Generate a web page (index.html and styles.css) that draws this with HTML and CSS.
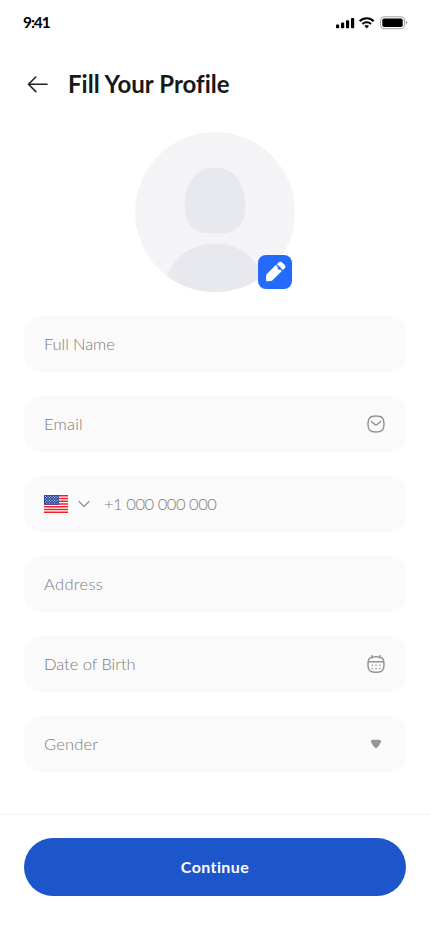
FILE: index.html
```html
<!DOCTYPE html>
<html lang="en">
<head>
<meta charset="utf-8">
<title>Fill Your Profile</title>
<link rel="stylesheet" href="styles.css">
</head>
<body>
<div class="screen">
  <div class="status">
    <span class="time">9:41</span>
    <svg width="72" height="14" viewBox="0 0 72 14">
      <rect x="0" y="8.6" width="3.2" height="3.6" rx=".8"/>
      <rect x="5" y="6.6" width="3.2" height="5.6" rx=".8"/>
      <rect x="10" y="4.2" width="3.2" height="8" rx=".8"/>
      <rect x="15" y="2" width="3.2" height="10.200" rx=".8"/>
      <g fill="none" stroke="#000" stroke-width="2">
        <path d="M23.7 5.200a9.900 9.900 0 0 1 14 0"/>
        <path d="M26.400 8a6.200 6.200 0 0 1 8.600 0"/>
      </g>
      <path d="M30.700 12.400l-2.300-2.500a3.500 3.500 0 0 1 4.600 0z"/>
      <rect x="44.500" y=".8" width="24" height="11.900" rx="3.500" fill="none" stroke="#a3a3a3"/>
      <rect x="46.300" y="2.500" width="20.400" height="8.500" rx="1.800"/>
      <path d="M69.800 4.800v4q1.300-.6 1.300-2t-1.300-2z" fill="#a3a3a3"/>
    </svg>
  </div>
  <header class="header">
    <svg width="22" height="20" viewBox="0 0 22 20" fill="none" stroke="#212121" stroke-width="1.600" stroke-linecap="round" stroke-linejoin="round"><path d="M20 10.300H1.500M8.800 3L1.500 10.300l7.300 7.300"/></svg>
    <h1 class="title">Fill Your Profile</h1>
  </header>
  <div class="avatar">
    <svg width="160" height="160" viewBox="0 0 160 160">
      <defs><clipPath id="circle"><circle cx="80" cy="80" r="80"/></clipPath></defs>
      <circle cx="80" cy="80" r="80" fill="#f4f4f7"/>
      <g fill="#e8e9ef" clip-path="url(#circle)">
        <path d="M80 35.500C101 35.500 110.300 54 110.300 74C110.300 93 101 101.300 86 101.300H74C59 101.300 49.700 93 49.700 74C49.700 54 59 35.500 80 35.500Z"/>
        <path d="M30 148C38 127 55 111.500 80 111.500S122 127 130 148V160H30Z"/>
      </g>
    </svg>
    <span class="edit">
      <svg width="34" height="34" viewBox="0 0 34 34" fill="#fff">
        <path d="M8.100 26.200V20.600Q8.100 19.800 8.700 19.200L17.800 10.100L19.800 12Q19.200 13.300 20.200 14.200Q21.100 15 22.200 14.400L23.900 16L14.500 25.300Q13.700 26 12.900 26.100Z"/>
        <path d="M18.700 9.200L20.600 7.500Q22.500 6 24.400 7.700L26.800 10Q28.200 11.700 26.800 13.200L24.900 15.100L22.700 13Q22.700 11.200 20.900 11.300Z"/>
      </svg>
    </span>
  </div>
  <main class="form">
    <div class="field"><span class="label name">Full Name</span></div>
    <div class="field"><span class="label email">Email</span>
      <svg width="20" height="20" viewBox="0 0 20 20" fill="none" stroke="#949494" stroke-width="1.400" stroke-linecap="round" stroke-linejoin="round"><path d="M10 2C4 2 2 4 2 10s2 8 8 8 8-2 8-8-2-8-8-8Z"/><path d="M5.500 7.600l3.300 2.800q1.200.9 2.400 0l3.300-2.800"/></svg>
    </div>
    <div class="field phone">
      <svg width="24" height="18" viewBox="0 0 24 18">
        <rect width="24" height="18" fill="#fff"/>
        <path d="M0 .7H24M0 3.460H24M0 6.230H24M0 9H24M0 11.770H24M0 14.540H24M0 17.300H24" stroke="#ed202b" stroke-width="1.500"/>
        <rect width="15" height="9.700" fill="#243f9e"/>
        <g stroke="#dce1f2" stroke-width="1" stroke-dasharray="1 1.600"><path d="M1 1.300H14.500M1 4H14.500M1 6.700H14.500"/><path d="M2.300 2.650H14.500M2.300 5.350H14.500M2.300 8.200H14.500"/></g>
      </svg>
      <svg class="chevron" width="12" height="8" viewBox="0 0 12 8" fill="none" stroke="#949494" stroke-width="1.300" stroke-linecap="round" stroke-linejoin="round"><path d="M1 1.500l5 5 5-5"/></svg>
      <span class="label number">+1 000 000 000</span>
    </div>
    <div class="field"><span class="label address">Address</span></div>
    <div class="field"><span class="label birth">Date of Birth</span>
      <svg width="20" height="20" viewBox="0 0 20 20" fill="none" stroke="#949494" stroke-width="1.400" stroke-linecap="round"><path d="M10 2.800C4 2.800 2 4.300 2 10.500s2 7.800 8 7.800 8-1.600 8-7.800-2-7.700-8-7.700Z"/><path d="M2.300 7.700H17.700M6.100 1.400V4M13.900 1.400V4"/><path d="M6.200 11.200h.1M10 11.200h.1M13.800 11.200h.1M6.200 14.400h.1M10 14.400h.1M13.800 14.400h.1" stroke-width="1.500"/></svg>
    </div>
    <div class="field"><span class="label gender">Gender</span>
      <svg width="20" height="20" viewBox="0 0 20 20" fill="#949494"><path d="M5 7.400Q4.700 6 6.200 5.900Q10 5.500 13.800 5.900Q15.300 6 15 7.400Q14.300 10.500 11.200 13.500Q10 14.600 8.800 13.500Q5.700 10.500 5 7.400Z"/></svg>
    </div>
  </main>
  <footer class="footer"><button class="continue" type="button"><span>Continue</span></button></footer>
</div>
</body>
</html>
```
FILE: styles.css
```css
* { box-sizing: border-box; }
body { margin: 0; background: #fff; font-family: "Lato", sans-serif; color: #181818; }
.screen { width: 430px; height: 932px; display: flex; flex-direction: column; overflow: hidden; }
.status { height: 44px; padding: 0 23px; display: flex; align-items: center; justify-content: space-between; }
.status svg { margin: 1px -1px 0 0; }
.time { font-size: 15.5px; font-weight: 700; line-height: 20px; letter-spacing: -1.1px; color: #000; }
.header { height: 80px; padding: 0 27px; display: flex; align-items: center; gap: 19px; }
.title { margin: 0; font-size: 24px; line-height: 32px; font-weight: 700; letter-spacing: .03px; white-space: nowrap; }
.avatar { position: relative; width: 160px; height: 160px; margin: 8px auto 24px; }
.avatar svg { display: block; }
.edit { position: absolute; left: 123px; top: 123px; width: 34px; height: 34px; border-radius: 8px; background: #246bfd; }
.form { display: flex; flex-direction: column; gap: 24px; padding: 0 24px; }
.field { height: 56px; border-radius: 16px; padding: 0 20px; background: #fafafa; display: flex; align-items: center; justify-content: space-between; }
.label { font-size: 16.5px; line-height: 24px; font-weight: 300; color: #7c7c7c; white-space: nowrap; }
.name { letter-spacing: -.08px; }
.email { letter-spacing: .2px; }
.number { letter-spacing: -.45px; }
.address { letter-spacing: .33px; }
.birth { letter-spacing: -.05px; }
.gender { letter-spacing: .18px; }
.phone { justify-content: flex-start; }
.chevron { margin: 0 14px 0 10px; }
.footer { margin-top: 42px; border-top: 1px solid #f3f3f3; padding: 23px 24px 36px; display: flex; }
.continue { flex: 1; height: 58px; border: 0; border-radius: 29px; background: #1d55ca; color: #fff; font: 700 16px/24px "Lato", sans-serif; letter-spacing: .4px; }
```
